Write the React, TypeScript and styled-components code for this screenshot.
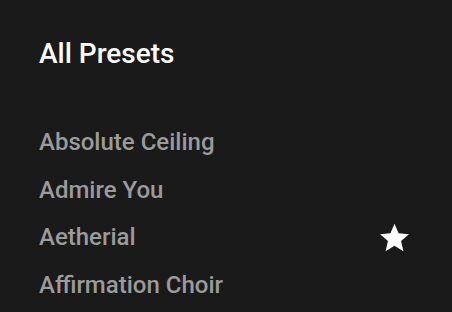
import React from "react";
import styled, { createGlobalStyle } from "styled-components";

const Global = createGlobalStyle`
  html, body { margin: 0; padding: 0; background: #1a1a1a; }
  body { font-family: Roboto, "Noto Sans", sans-serif; }
`;

const Page = styled.div`
  width: 452px;
  height: 312px;
  background: #1a1a1a;
  box-sizing: border-box;
  padding: 38px 40px 0 39px;
  overflow: hidden;
`;

const Title = styled.h1`
  margin: 0;
  font-size: 28px;
  font-weight: 500;
  color: #ffffff;
  line-height: 32px;
`;

const List = styled.ul`
  list-style: none;
  margin: 48px 0 0 0;
  padding: 0;
  display: flex;
  flex-direction: column;
`;

const Row = styled.li`
  display: flex;
  align-items: center;
  justify-content: space-between;
  height: 47.7px;
`;

const Name = styled.span`
  font-size: 24px;
  font-weight: 500;
  color: #9b9b9b;
`;

const Star = () => (
  <svg width="35" height="35" viewBox="0 0 24 24" aria-hidden>
    <path
      fill="#ffffff"
      d="M12 2.5l2.8 6.6 7.1.6-5.4 4.7 1.6 7-6.1-3.7-6.1 3.7 1.6-7-5.4-4.7 7.1-.6z"
    />
  </svg>
);

const presets = [
  { name: "Absolute Ceiling", fav: false },
  { name: "Admire You", fav: false },
  { name: "Aetherial", fav: true },
  { name: "Affirmation Choir", fav: false },
];

export default function App() {
  return (
    <>
      <Global />
      <Page>
        <Title>All Presets</Title>
        <List>
          {presets.map((p) => (
            <Row key={p.name}>
              <Name>{p.name}</Name>
              {p.fav && <Star />}
            </Row>
          ))}
        </List>
      </Page>
    </>
  );
}
